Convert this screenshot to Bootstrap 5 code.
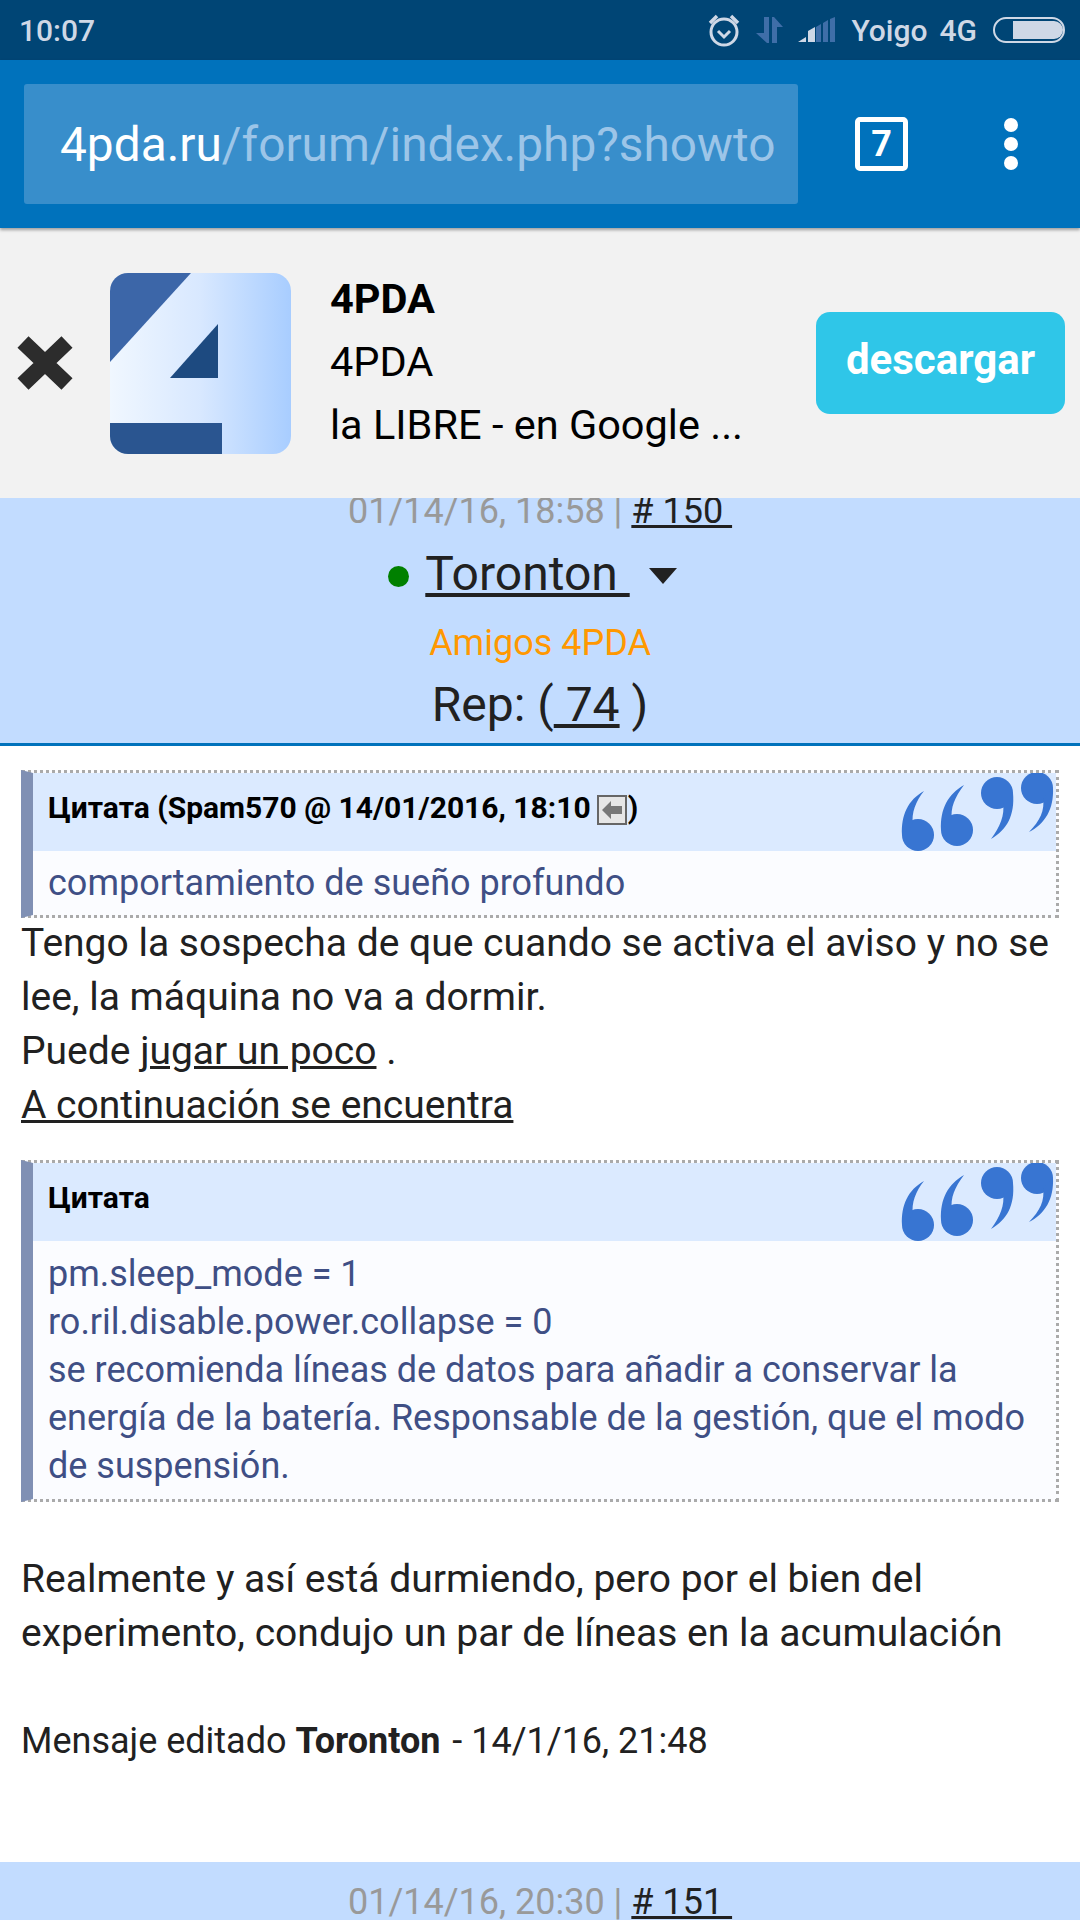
<!DOCTYPE html>
<html lang="es">
<head>
<meta charset="UTF-8">
<meta name="viewport" content="width=device-width, initial-scale=1.0">
<title>4PDA</title>
<link href="https://cdn.jsdelivr.net/npm/bootstrap@5.3.0/dist/css/bootstrap.min.css" rel="stylesheet">
<style>
    html, body { height: 1920px; overflow: hidden; }
    body { font-family: Roboto, "Liberation Sans", sans-serif; color: #212121; background: #fff; }
    a { color: #212121; }

    .status-bar { height: 60px; background: #004575; color: #cfd8e6; font-weight: 500; font-size: 30px; padding: 0 15px 0 19px; }
    .st-arrows { margin-left: 16px; }
    .st-signal { margin-left: 15px; }
    .st-carrier { margin-left: 16px; }
    .st-net { margin-left: 12px; }
    .st-batt { margin-left: 16px; }
    .toolbar { height: 168px; background: #0072bc; padding-left: 24px; box-shadow: 0 2px 3px rgba(0,0,0,.35); position: relative; z-index: 2; }
    .url-box { width: 774px; height: 120px; background: #388ecb; border-radius: 3px; font-size: 47.8px; color: #9cc5e8; padding: 3px 0 0 36px; overflow: hidden; white-space: nowrap; }
    .url-box b { font-weight: 400; color: #fff; }
    .tab-count { width: 53px; height: 54px; border: 5px solid #fff; border-radius: 5px; color: #fff; font-size: 36px; font-weight: 700; margin-left: 57px; line-height: 1; }
    .menu-dots { margin-left: 96px; gap: 5px; }
    .menu-dots i { display: block; width: 14px; height: 14px; background: #fff; border-radius: 50%; }

    .app-banner { height: 270px; background: #f2f2f2; padding: 0 15px 0 16px; }
    .app-icon { margin-left: 36px; flex: none; }
    .app-text { margin-left: 39px; padding-bottom: 4px; font-size: 41.5px; line-height: 63px; color: #000; flex: 1; white-space: nowrap; }
    .app-text strong { font-weight: 700; display: block; }
    .app-get { width: 249px; height: 102px; background: #2fc6e8; border: 0; border-radius: 14px; color: #fff; font-size: 42px; font-weight: 700; padding: 0 0 7px; }

    .post-head { background: #c2dcff; text-align: center; }
    .first-head { height: 248px; border-bottom: 3px solid #0072bc; }
    .post-date { font-size: 36px; line-height: 40px; color: #999; }
    .post-date a { color: #212121; }
    .first-head .post-date { margin-top: -7px; }
    .post-author { font-size: 48px; line-height: 64px; margin-top: 11px; }
    .online-dot { display: inline-block; width: 21px; height: 21px; border-radius: 50%; background: #008000; margin-right: 16px; vertical-align: 3px; }
    .author-caret { display: inline-block; border: 14px solid transparent; border-top: 16px solid #212121; border-bottom: 0; margin-left: 19px; margin-right: 15px; vertical-align: 6px; }
    .post-group { font-size: 36px; line-height: 40px; color: #ff9800; margin-top: 17px; }
    .post-rep { font-size: 48px; line-height: 56px; margin-top: 14px; }

    .post-body { padding: 24px 21px 0 21px; font-size: 39px; line-height: 54px; }
    .post-lines { margin-top: -2px; }
    .quote-box { border: 3px dotted #aaa; border-left: 12px solid #8090b4; background: #fbfcff; }
    .quote-top { height: 78px; background: #dbeaff; color: #000; font-size: 30px; font-weight: 700; padding: 0 0 9px 15px; position: relative; overflow: hidden; }
    .quote-marks { position: absolute; right: 1px; top: 0; }
    .back-arrow { margin: 0 1px 0 6px; vertical-align: -7px; }
    .quote-text { font-size: 36px; line-height: 48px; color: #3f4f85; padding: 8px 15px; }
    .quote-second { margin-top: 28px; }
    .quote-second .quote-text { padding: 9px 15px; }
    .post-para { margin-top: 50px; }
    .post-edit { margin-top: 54px; font-size: 36px; }
    .post-edit strong { font-weight: 700; margin-right: 3px; }
    .next-head { margin-top: 94px; height: 60px; padding-top: 20px; }
</style>
</head>
<body>
    <svg class="d-none">
        <symbol id="quoteMarks" viewBox="0 0 155 78">
            <circle cx="18" cy="62" r="16"/><path d="M24 18C8 27 1 42 2 62L13 52C11 40 16 28 24 18z"/>
            <circle cx="57" cy="57" r="16"/><path d="M64 12C48 21 40 36 41 57L52 47C50 35 55 24 64 12z"/>
            <circle cx="97" cy="20" r="16"/><path d="M91 66C107 57 115 42 113 20L103 30C105 42 100 54 91 66z"/>
            <circle cx="137" cy="15" r="16"/><path d="M129 59C145 51 154 36 153 15L143 25C145 37 140 48 129 59z"/>
        </symbol>
    </svg>

    <div class="status-bar d-flex align-items-center justify-content-between">
        <span>10:07</span>
        <div class="d-flex align-items-center">
            <svg width="32" height="34" viewBox="0 0 32 34" fill="none" stroke="#cfd8e6" stroke-width="3"><circle cx="16" cy="19" r="13"/><path d="M10 18l6 6 6-6"/><path d="M2 10l7-7M30 10l-7-7" stroke-width="3.5"/></svg>
            <svg class="st-arrows" width="27" height="26" viewBox="0 0 27 26" fill="#3f6ea8"><path d="M8 0h5v26h-2L0 16h8zM16 0h2l9 10h-6v16h-5z"/></svg>
            <svg class="st-signal" width="37" height="26" viewBox="0 0 37 26"><path d="M0 25l8-5v5zM10 25v-11l7-4v15z" fill="#cfd8e6"/><path d="M18 25V10l5-3v18zM25 25V6l5-3v22zM32 25V2l5-2v25z" fill="#3f6ea8"/></svg>
            <span class="st-carrier">Yoigo</span>
            <span class="st-net">4G</span>
            <svg class="st-batt" width="72" height="26" viewBox="0 0 72 26"><rect x="1" y="1" width="70" height="24" rx="12" fill="none" stroke="#cfd8e6" stroke-width="2"/><path d="M20 4h41a9 9 0 0 1 0 18H20z" fill="#cfd8e6"/></svg>
        </div>
    </div>

    <div class="toolbar d-flex align-items-center">
        <div class="url-box d-flex align-items-center"><b>4pda.ru</b>/forum/index.php?showto</div>
        <div class="tab-count d-flex align-items-center justify-content-center">7</div>
        <div class="menu-dots d-flex flex-column"><i></i><i></i><i></i></div>
    </div>

    <div class="app-banner d-flex align-items-center">
        <svg width="58" height="56" viewBox="0 0 58 56"><path d="M7 7L51 49M51 7L7 49" stroke="#2c2c2c" stroke-width="16"/></svg>
        <svg class="app-icon" width="181" height="181" viewBox="0 0 181 181">
            <defs>
                <linearGradient id="iconBg" x1="0" x2="1" y1="0" y2="0"><stop offset="0" stop-color="#f0f7ff"/><stop offset=".5" stop-color="#d8e8ff"/><stop offset="1" stop-color="#a8cdff"/></linearGradient>
                <clipPath id="iconClip"><rect width="181" height="181" rx="18"/></clipPath>
            </defs>
            <g clip-path="url(#iconClip)">
                <rect width="181" height="181" fill="url(#iconBg)"/>
                <path d="M0 0H81L0 89z" fill="#3c66a8"/>
                <path d="M108 51V105H60z" fill="#1d4a80"/>
                <rect y="150" width="112" height="31" fill="#2a5590"/>
            </g>
        </svg>
        <div class="app-text">
            <strong>4PDA</strong>
            <div>4PDA</div>
            <div>la LIBRE - en Google ...</div>
        </div>
        <button class="app-get" type="button">descargar</button>
    </div>

    <div class="post-head first-head overflow-hidden">
        <div class="post-date">01/14/16, 18:58 | <a href="#"># 150&nbsp;</a></div>
        <div class="post-author"><span class="online-dot"></span><a href="#">Toronton&nbsp;</a><span class="author-caret"></span></div>
        <div class="post-group">Amigos 4PDA</div>
        <div class="post-rep">Rep: (<a href="#">&nbsp;74</a> )</div>
    </div>

    <div class="post-body">
        <div class="quote-box">
            <div class="quote-top d-flex align-items-center">
                <span>Цитата (Spam570 @ 14/01/2016, 18:10<svg class="back-arrow" width="30" height="30" viewBox="0 0 30 30"><rect x="1" y="1" width="28" height="28" fill="#e6e6e6" stroke="#666" stroke-width="2"/><path d="M5 15l9-9v5h11v8H14v5z" fill="#777"/></svg>)</span>
                <svg class="quote-marks" width="155" height="78" fill="#3875d2"><use href="#quoteMarks"/></svg>
            </div>
            <div class="quote-text">comportamiento de sueño profundo</div>
        </div>
        <div class="post-lines">
            <div>Tengo la sospecha de que cuando se activa el aviso y no se lee, la máquina no va a dormir.</div>
            <div>Puede <a href="#">jugar un poco</a> .</div>
            <div><a href="#">A continuación se encuentra</a></div>
        </div>

        <div class="quote-box quote-second">
            <div class="quote-top d-flex align-items-center">
                <span>Цитата</span>
                <svg class="quote-marks" width="155" height="78" fill="#3875d2"><use href="#quoteMarks"/></svg>
            </div>
            <div class="quote-text">pm.sleep_mode = 1<br>ro.ril.disable.power.collapse = 0<br>se recomienda líneas de datos para añadir a conservar la energía de la batería. Responsable de la gestión, que el modo de suspensión.</div>
        </div>

        <div class="post-para">Realmente y así está durmiendo, pero por el bien del experimento, condujo un par de líneas en la acumulación</div>
        <div class="post-edit">Mensaje editado <strong>Toronton</strong> - 14/1/16, 21:48</div>
    </div>

    <div class="post-head next-head post-date">01/14/16, 20:30 | <a href="#"># 151&nbsp;</a></div>

<script src="https://cdn.jsdelivr.net/npm/bootstrap@5.3.0/dist/js/bootstrap.bundle.min.js"></script>
</body>
</html>
